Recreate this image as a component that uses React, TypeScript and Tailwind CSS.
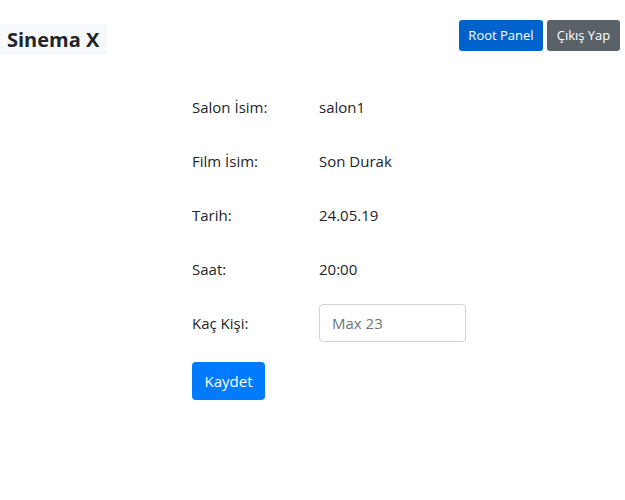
import React from 'react'

const rows = [
  { label: 'Salon İsim:', value: 'salon1' },
  { label: 'Film İsim:', value: 'Son Durak' },
  { label: 'Tarih:', value: '24.05.19' },
  { label: 'Saat:', value: '20:00' },
]

export default function App() {
  return (
    <div className="min-h-[500px] bg-white text-[#212529]" style={{ fontFamily: '"Open Sans", sans-serif' }}>
      {/* Navbar */}
      <nav className="flex items-start justify-between pt-5 pr-[5px]">
        <div className="mt-[4px] flex h-[31px] w-[107px] items-center bg-[#f8f9fa] pl-[7px] text-[20px] font-bold text-[#212529]">
          Sinema X
        </div>
        <div className="flex gap-1">
          <button className="h-[31px] w-[84px] rounded-[3px] bg-[#0062cc] text-[13px] text-white">Root Panel</button>
          <button className="h-[31px] w-[73px] rounded-[3px] bg-[#5a6268] text-[13px] text-white">Çıkış Yap</button>
        </div>
      </nav>

      {/* Form */}
      <div className="ml-[192px] mt-[25px] flex w-[280px] flex-col">
        {rows.map((r) => (
          <div key={r.label} className="flex h-[54px] items-center text-[15px]">
            <span className="w-[127px]">{r.label}</span>
            <span>{r.value}</span>
          </div>
        ))}
        <div className="flex h-[54px] items-center text-[15px]">
          <span className="w-[127px]">Kaç Kişi:</span>
          <input
            placeholder="Max 23"
            className="h-[38px] w-[147px] rounded-[4px] border border-[#ced4da] px-3 text-[15px] placeholder:text-[#6c757d] outline-none"
          />
        </div>
        <div className="mt-[12px]">
          <button className="h-[38px] w-[73px] rounded-[4px] bg-[#007bff] text-[15px] text-white">Kaydet</button>
        </div>
      </div>
    </div>
  )
}
